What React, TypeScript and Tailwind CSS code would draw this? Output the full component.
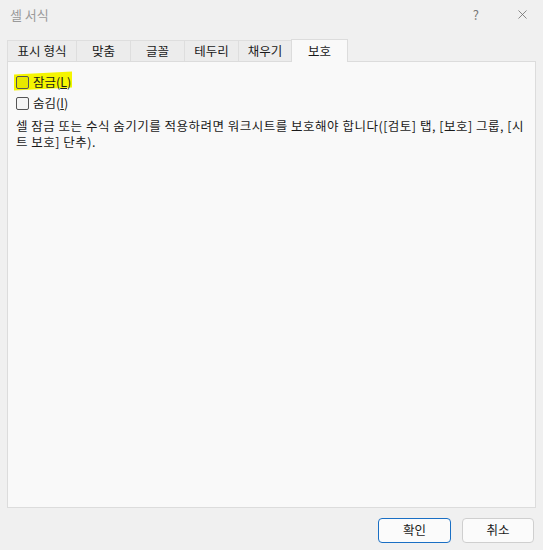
import { X } from "lucide-react";

const tabs = [
  { label: "표시 형식", w: "w-[69px]" },
  { label: "맞춤", w: "w-[54px]" },
  { label: "글꼴", w: "w-[54px]" },
  { label: "테두리", w: "w-[54px]" },
  { label: "채우기", w: "w-[53px]" },
];

const font = { fontFamily: '"Noto Sans CJK KR", "Noto Sans", sans-serif' };

export default function App() {
  return (
    <div className="w-[543px] h-[550px] bg-[#f0f0f0] flex flex-col text-[#1a1a1a]" style={font}>
      {/* title bar */}
      <div className="h-[29px] flex items-center pl-[10px] pr-[13px]">
        <span className="text-[13px] text-[#9a9a9a]">셀 서식</span>
        <span className="ml-auto text-[13px] text-[#777] mr-[36px]">?</span>
        <X className="w-[15px] h-[15px] text-[#666]" strokeWidth={1.2} />
      </div>

      {/* tabs */}
      <div className="mt-[9px] pl-[7px] flex items-end h-[23px]">
        {tabs.map((t) => (
          <div
            key={t.label}
            className={`${t.w} h-[21px] bg-[#ececec] border-l border-t border-[#dedede] flex items-center justify-center text-[12.5px]`}
          >
            {t.label}
          </div>
        ))}
        <div className="w-[57px] h-[23px] bg-[#f9f9f9] border-l border-t border-r border-[#dcdcdc] flex items-center justify-center text-[12.5px] -mb-px relative z-10">
          보호
        </div>
      </div>

      {/* panel */}
      <div className="ml-[7px] mr-[7px] h-[447px] bg-[#f9f9f9] border border-[#dcdcdc] px-[8px] pt-[11px] text-[12.5px]">
        <label className="flex items-center gap-[4px] h-[18px]">
          <span className="relative flex items-center">
            <span className="absolute -left-[2px] -top-[3px] w-[58px] h-[16px] bg-[#f5f500] -skew-y-3" />
            <span className="relative w-[13px] h-[13px] border border-[#555] rounded-[2px] bg-[#e8e800]" />
          </span>
          <span className="relative">잠금(<u>L</u>)</span>
        </label>
        <label className="flex items-center gap-[4px] h-[18px] mt-[3px]">
          <span className="w-[13px] h-[13px] border border-[#555] rounded-[2px] bg-[#f5f5f5]" />
          <span>숨김(<u>I</u>)</span>
        </label>
        <p className="mt-[6px] leading-[16px] w-[514px] break-all tracking-[0.5px]">
          셀 잠금 또는 수식 숨기기를 적용하려면 워크시트를 보호해야 합니다([검토] 탭, [보호] 그룹, [시트 보호] 단추).
        </p>
      </div>

      {/* buttons */}
      <div className="flex justify-end gap-[11px] pr-[9px] mt-[10px]">
        <button className="w-[73px] h-[25px] rounded-[4px] border border-[#1a6fc4] bg-[#fbfbfb] text-[12.5px]">
          확인
        </button>
        <button className="w-[72px] h-[25px] rounded-[4px] border border-[#cfcfcf] bg-[#fbfbfb] text-[12.5px]">
          취소
        </button>
      </div>
    </div>
  );
}
